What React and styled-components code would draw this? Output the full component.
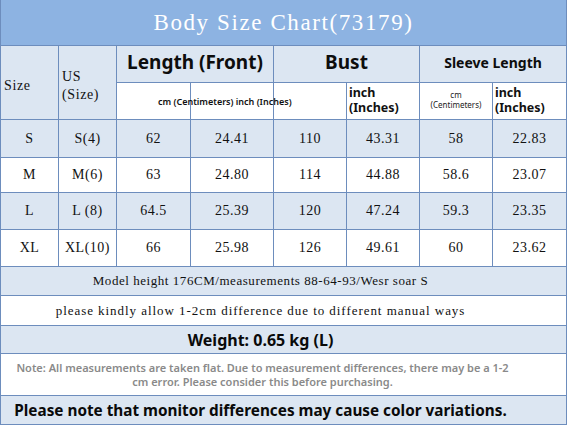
import styled, { createGlobalStyle } from "styled-components";

const GlobalStyle = createGlobalStyle`
  body {
    margin: 0;
    background: #fff;
    font-family: "Liberation Serif", serif;
  }
`;

const LINE = "#6d8dbd";
const LIGHT = "#dce6f2";

const rows = [
  { size: "S", us: "S(4)", len: "62", lenIn: "24.41", bust: "110", bustIn: "43.31", sl: "58", slIn: "22.83", shade: true },
  { size: "M", us: "M(6)", len: "63", lenIn: "24.80", bust: "114", bustIn: "44.88", sl: "58.6", slIn: "23.07" },
  { size: "L", us: "L (8)", len: "64.5", lenIn: "25.39", bust: "120", bustIn: "47.24", sl: "59.3", slIn: "23.35", shade: true },
  { size: "XL", us: "XL(10)", len: "66", lenIn: "25.98", bust: "126", bustIn: "49.61", sl: "60", slIn: "23.62" },
];

const Chart = styled.div`
  width: 567px;
  display: grid;
  grid-template-columns: 57px 57px 73px 82px 72px 72px 72px 73px;
  grid-template-rows: 45px 36px 36px 37px 34px 36px 36px 28px 29px 27px 41px 28px;
  gap: 1px;
  padding: 0 1px 1px 1px;
  box-sizing: border-box;
  background: ${LINE};
`;

const Title = styled.div`
  grid-column: 1 / -1;
  background: #8db3e2;
  color: #fff;
  display: flex;
  align-items: center;
  justify-content: center;
  font-family: "Liberation Serif", serif;
  font-size: 23px;
  letter-spacing: 1.6px;
  padding-top: 1px;
`;

const Cell = styled.div`
  background: ${(p) => (p.$shade ? LIGHT : "#fff")};
  display: flex;
  align-items: center;
  justify-content: center;
  color: #111;
  font-family: "Liberation Serif", serif;
  font-size: 14px;
  letter-spacing: 0.5px;
  min-width: 0;
`;

const HeadCell = styled(Cell)`
  grid-row: span 2;
  background: ${LIGHT};
  justify-content: flex-start;
  padding: 6px 0 0 3px;
  line-height: 18px;
  font-size: 14px;
  letter-spacing: 0.6px;
`;

const GroupCell = styled(Cell)`
  grid-column: span 2;
  background: ${LIGHT};
  font-family: "Noto Sans", sans-serif;
  font-weight: 700;
  letter-spacing: 0;
  font-size: ${(p) => p.$size || 19}px;
  color: #0d0d0d;
  padding-bottom: 4px;
`;

const UnitCell = styled(Cell)`
  font-family: "Noto Sans", sans-serif;
  letter-spacing: 0;
  flex-direction: column;
  align-items: flex-start;
  justify-content: flex-start;
  padding: 2px 0 0 2px;
  font-size: 12.5px;
  font-weight: 700;
  line-height: 15px;
`;

const OverflowUnit = styled(Cell)`
  z-index: 1;
  justify-content: flex-start;
  padding-left: 41px;
  white-space: nowrap;
  overflow: visible;
  font-family: "Noto Sans", sans-serif;
  font-size: 9px;
  font-weight: 600;
  letter-spacing: 0;
`;

const TinyUnit = styled(Cell)`
  flex-direction: column;
  font-family: "Noto Sans", sans-serif;
  font-size: 8px;
  letter-spacing: 0;
  line-height: 10px;
  color: #222;
  padding-bottom: 3px;
`;

const WideRow = styled(Cell)`
  grid-column: 1 / -1;
  padding-right: 46px;
  font-size: ${(p) => p.$size || 13}px;
  letter-spacing: ${(p) => p.$track ?? 0.7}px;
`;

const BoldRow = styled(WideRow)`
  font-family: "Noto Sans", sans-serif;
  font-weight: 700;
  letter-spacing: 0;
  color: #0a0a0a;
`;

const NoteRow = styled(WideRow)`
  font-family: "Noto Sans", sans-serif;
  font-weight: 600;
  letter-spacing: 0;
  font-size: 11px;
  line-height: 14px;
  color: #8a8a8a;
  text-align: center;
  padding: 0 54px 0 12px;
`;

export default function App() {
  return (
    <>
      <GlobalStyle />
      <Chart>
        <Title>Body Size Chart(73179)</Title>

        <HeadCell>Size</HeadCell>
        <HeadCell>US<br />(Size)</HeadCell>
        <GroupCell>Length (Front)</GroupCell>
        <GroupCell>Bust</GroupCell>
        <GroupCell $size={14}>Sleeve Length</GroupCell>

        <OverflowUnit>cm (Centimeters) inch (Inches)</OverflowUnit>
        <Cell />
        <Cell />
        <UnitCell>
          <span>inch</span>
          <span>(Inches)</span>
        </UnitCell>
        <TinyUnit>
          <span>cm</span>
          <span>(Centimeters)</span>
        </TinyUnit>
        <UnitCell>
          <span>inch</span>
          <span>(Inches)</span>
        </UnitCell>

        {rows.map((r) => [
          <Cell key={r.size + "a"} $shade={r.shade}>{r.size}</Cell>,
          <Cell key={r.size + "b"} $shade={r.shade}>{r.us}</Cell>,
          <Cell key={r.size + "c"} $shade={r.shade}>{r.len}</Cell>,
          <Cell key={r.size + "d"} $shade={r.shade}>{r.lenIn}</Cell>,
          <Cell key={r.size + "e"} $shade={r.shade}>{r.bust}</Cell>,
          <Cell key={r.size + "f"} $shade={r.shade}>{r.bustIn}</Cell>,
          <Cell key={r.size + "g"} $shade={r.shade}>{r.sl}</Cell>,
          <Cell key={r.size + "h"} $shade={r.shade}>{r.slIn}</Cell>,
        ])}

        <WideRow $shade $track={0.55}>Model height 176CM/measurements 88-64-93/Wesr soar S</WideRow>
        <WideRow $track={0.95}>please kindly allow 1-2cm difference due to different manual ways</WideRow>
        <BoldRow $shade $size={16}>Weight: 0.65 kg (L)</BoldRow>
        <NoteRow>
          Note: All measurements are taken flat. Due to measurement differences, there may be a 1-2 cm error. Please consider this before purchasing.
        </NoteRow>
        <BoldRow $shade $size={15.3}>Please note that monitor differences may cause color variations.</BoldRow>
      </Chart>
    </>
  );
}
